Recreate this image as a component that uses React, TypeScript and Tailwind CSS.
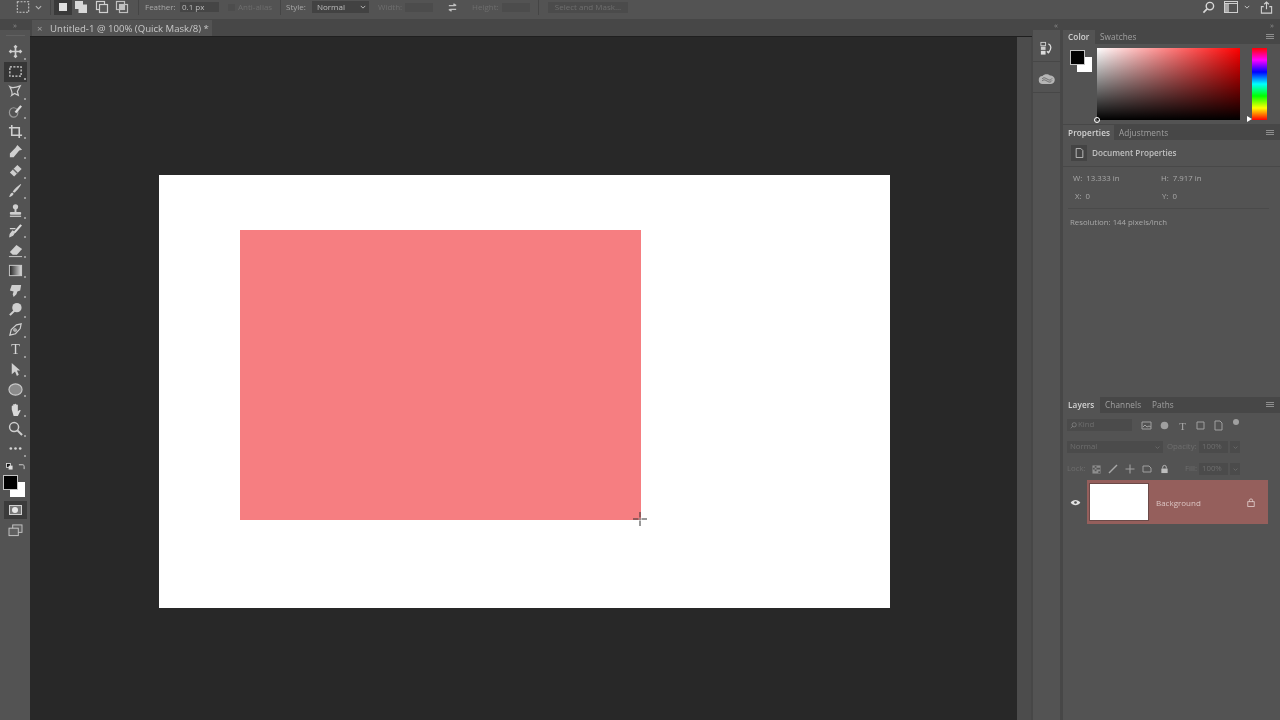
import React from "react";

const font = { fontFamily: '"Open Sans", "Liberation Sans", sans-serif' };

const T = ({ children, className = "" }: { children: React.ReactNode; className?: string }) => (
  <span className={"whitespace-nowrap leading-none " + className}>{children}</span>
);

const stroke = { fill: "none", stroke: "#cfcfcf", strokeWidth: 1.3 } as const;

const toolIcons: React.ReactNode[] = [
  <g key="move" {...stroke}><path d="M8 2v12M2 8h12M6.500 3.500 8 2l1.500 1.500M6.500 12.500 8 14l1.500-1.500M3.500 6.500 2 8l1.500 1.500M12.500 6.500 14 8l-1.500 1.500" strokeWidth={1.800} /></g>,
  <rect key="marquee" x="2" y="3" width="12" height="10" fill="none" stroke="#d5d5d5" strokeWidth={1.300} strokeDasharray="2.200 1.500" />,
  <g key="lasso" {...stroke}><path d="M2 3c3 2 6 1 11-1l-3 6 1 4-4-2-3 2c1-2 0-5-2-9z" /></g>,
  <g key="quick" {...stroke}><ellipse cx="6" cy="9" rx="4.500" ry="5" stroke="#999" /><path d="M8 9l6-7" strokeWidth={2.400} stroke="#ddd" /></g>,
  <g key="crop" {...stroke}><path d="M4 1v11h11M1 4h11v11" strokeWidth={1.700} /></g>,
  <g key="dropper" fill="#cfcfcf"><path d="M10 1l5 5-3 1-6 7H2v-4l6-6z" /></g>,
  <g key="heal"><path d="M2 10l8-8 4.500 4.500-8 8z" fill="#cfcfcf" /><path d="M5.500 6.500l4.500 4.500" stroke="#666" strokeWidth={1.500} /></g>,
  <path key="brush" d="M14 1c.5 1-5 8-7.500 9.500L5 9c1.500-2 8-8.500 9-8zM4.500 10l1.500 1.500c-.5 2-3 3.500-5 3.500 1-1 1-4 3.500-5z" fill="#cfcfcf" />,
  <g key="stamp" fill="#cfcfcf"><circle cx="8" cy="4" r="2.800" /><rect x="7" y="6" width="2" height="4" /><rect x="2" y="9.500" width="12" height="3" rx="1" /><rect x="2" y="13.500" width="12" height="1.300" /></g>,
  <g key="history" {...stroke}><path d="M14 2 7 10" strokeWidth={2.400} stroke="#ddd" /><path d="M7 10l-2 3-3 1.500c0-2 1-4 3-6z" fill="#cfcfcf" /><path d="M2 6h6" /></g>,
  <g key="eraser" fill="#cfcfcf"><path d="M9 2l6 4.500-5.500 6H5L2 9.500z" /><path d="M1 14.500h14" stroke="#cfcfcf" /></g>,
  <g key="grad"><defs><linearGradient id="tg"><stop offset="0" stopColor="#222" /><stop offset="1" stopColor="#ddd" /></linearGradient></defs><rect x="1.500" y="2.500" width="13" height="11" fill="url(#tg)" stroke="#ccc" /></g>,
  <path key="smudge" d="M4 2h10l-1 6-3 1-1 3-3 3-1-3 1-3-4-1z" fill="#cfcfcf" />,
  <g key="dodge" fill="#cfcfcf"><circle cx="9.500" cy="6" r="5" /><path d="M7 9l-5 5" stroke="#cfcfcf" strokeWidth={2.200} /></g>,
  <g key="pen" {...stroke}><path d="M14 2 9 3 3.500 8 2 14l6-1.500 5-5.500z" /><circle cx="7.500" cy="8.500" r="1.300" /></g>,
  <g key="t"><text x="8" y="12.500" textAnchor="middle" fontSize="15" fontFamily="Liberation Serif, serif" fill="#d8d8d8">T</text></g>,
  <path key="arrow" d="M4 1 13 9H9.500l2 4.500-2 1.500-2-5-3.500 3z" fill="#d0d0d0" />,
  <ellipse key="ellipse" cx="8" cy="8" rx="7" ry="6" fill="#8a8a8a" stroke="#c8c8c8" strokeWidth={1.200} />,
  <path key="hand" d="M4 8V4.500c0-1 1.500-1 1.500 0V3c0-1 1.700-1 1.700 0v-.5c0-1 1.700-1 1.700 0V3.500c0-1 1.600-1 1.600 0V10c1-1 2.500-2 3-1l-3 6H6z" fill="#d8d8d8" />,
  <g key="zoom" {...stroke}><circle cx="6.500" cy="6.500" r="4.800" strokeWidth={1.600} /><path d="M10 10l5 5" strokeWidth={2.200} /></g>,
  <g key="more" fill="#d5d5d5"><circle cx="3" cy="8" r="1.400" /><circle cx="8" cy="8" r="1.400" /><circle cx="13" cy="8" r="1.400" /></g>,
];

function Tool({ icon, active }: { icon: React.ReactNode; active?: boolean }) {
  return (
    <div className={"relative flex h-[19.85px] w-[23px] items-center justify-center " + (active ? "bg-[#363636]" : "")}>
      <svg viewBox="0 0 16 16" className="h-[15px] w-[15px]">{icon}</svg>
      <span className="absolute bottom-[2px] right-[1px] h-[2px] w-[2px] bg-[#9a9a9a]" />
    </div>
  );
}

function Swatch() {
  return (
    <div className="relative h-[22px] w-[22px] shrink-0">
      <div className="absolute bottom-0 right-0 h-[15px] w-[15px] bg-white" />
      <div className="absolute left-0 top-0 h-[15px] w-[15px] border border-[#c4c4c4] bg-black" />
    </div>
  );
}

const Chevron = ({ c = "#b5b5b5", className = "h-[7px] w-[7px]" }: { c?: string; className?: string }) => (
  <svg viewBox="0 0 8 8" className={className}><path d="M1 2.500l3 3 3-3" fill="none" stroke={c} strokeWidth={1.300} /></svg>
);

const Div = ({ className = "" }: { className?: string }) => <div className={"h-[16px] w-px bg-[#454545] " + className} />;

function Options() {
  return (
    <div className="flex h-[19px] items-center bg-[#535353] pb-[5px] pt-0 text-[8px] text-[#a8a8a8]">
      <svg viewBox="0 0 16 16" className="ml-[16px] h-[14px] w-[14px] shrink-0"><rect x="1.500" y="2" width="13" height="12" fill="none" stroke="#c8c8c8" strokeWidth={1.200} strokeDasharray="2.200 1.500" /></svg>
      <Chevron className="ml-[4.500px] h-[7px] w-[7px] shrink-0" />
      <Div className="ml-[8.500px] shrink-0" />
      <div className="ml-[3px] flex h-[16px] w-[18px] shrink-0 items-center justify-center bg-[#3a3a3a]"><div className="h-[8px] w-[8px] bg-[#e0e0e0]" /></div>
      <svg viewBox="0 0 14 14" className="ml-[2px] h-[14px] w-[14px] shrink-0"><rect x="1" y="1" width="8" height="8" fill="#d8d8d8" /><rect x="4.500" y="4.500" width="8.500" height="8.500" fill="#d8d8d8" /></svg>
      <svg viewBox="0 0 14 14" className="ml-[7px] h-[14px] w-[14px] shrink-0"><rect x="1.500" y="1.500" width="8" height="8" fill="none" stroke="#d0d0d0" strokeWidth={1.200} /><rect x="4.500" y="4.500" width="8" height="8" fill="#5a5a5a" stroke="#d0d0d0" strokeWidth={1.200} /></svg>
      <svg viewBox="0 0 14 14" className="ml-[6px] h-[14px] w-[14px] shrink-0"><rect x="1.500" y="1.500" width="8" height="8" fill="none" stroke="#c0c0c0" strokeWidth={1.200} /><rect x="4.500" y="4.500" width="8" height="8" fill="none" stroke="#c0c0c0" strokeWidth={1.200} /><rect x="4.500" y="4.500" width="5" height="5" fill="#c0c0c0" /></svg>
      <Div className="ml-[9px] shrink-0" />
      <div className="ml-[6px] w-[30px] shrink-0"><T>Feather:</T></div>
      <div className="ml-[5px] flex h-[10px] w-[39px] shrink-0 items-center bg-[#454545] pl-[2px] text-[#bdbdbd]"><T>0.1 px</T></div>
      <div className="ml-[9px] h-[7px] w-[7px] shrink-0 bg-[#4d4d4d]" />
      <div className="ml-[3px] w-[34px] shrink-0 text-[#6e6e6e]"><T>Anti-alias</T></div>
      <Div className="ml-[8px] shrink-0" />
      <div className="ml-[5px] w-[20px] shrink-0"><T>Style:</T></div>
      <div className="ml-[6px] flex h-[12px] w-[57px] shrink-0 items-center justify-between bg-[#424242] pl-[5px] pr-[3px] text-[#bdbdbd]">
        <T>Normal</T>
        <Chevron className="h-[6px] w-[6px]" />
      </div>
      <div className="ml-[9px] w-[22px] shrink-0 text-[#6e6e6e]"><T>Width:</T></div>
      <div className="ml-[5px] h-[9px] w-[28px] shrink-0 bg-[#4c4c4c]" />
      <svg viewBox="0 0 12 12" className="ml-[13.500px] h-[11px] w-[11px] shrink-0"><path d="M2 4h6.500M7 2l3 2M10 8H3.500M5 10 2 8" fill="none" stroke="#c0c0c0" strokeWidth={1.500} /></svg>
      <div className="ml-[14.500px] w-[25px] shrink-0 text-[#6e6e6e]"><T>Height:</T></div>
      <div className="ml-[5px] h-[9px] w-[28px] shrink-0 bg-[#4c4c4c]" />
      <Div className="ml-[8px] shrink-0" />
      <div className="ml-[9px] flex h-[11px] w-[80px] shrink-0 items-center justify-center bg-[#4b4b4b] text-[#6e6e6e]"><T>Select and Mask...</T></div>
      <div className="flex-1" />
      <svg viewBox="0 0 14 14" className="h-[13px] w-[13px] shrink-0"><circle cx="8.500" cy="5.500" r="4" fill="none" stroke="#d8d8d8" strokeWidth={1.500} /><path d="M5.500 8.500 1.500 12.500" stroke="#d8d8d8" strokeWidth={1.800} /></svg>
      <svg viewBox="0 0 14 12" className="ml-[9.500px] h-[12px] w-[14px] shrink-0"><rect x=".5" y=".5" width="13" height="11" fill="none" stroke="#cfcfcf" /><rect x="1" y="3" width="4" height="8" fill="#a8a8a8" /><path d="M1 2.500h12" stroke="#cfcfcf" /></svg>
      <Chevron c="#c5c5c5" className="ml-[6px] h-[6px] w-[6px] shrink-0" />
      <svg viewBox="0 0 14 14" className="ml-[9.500px] mr-[7.500px] h-[13px] w-[13px] shrink-0"><path d="M4 6H1.500v7h11V6H10M7 9V1M4.500 3.500 7 1l2.500 2.500" fill="none" stroke="#cfcfcf" strokeWidth={1.200} /></svg>
    </div>
  );
}

const Grip = ({ children, className = "" }: { children: string; className?: string }) => (
  <span className={"text-[8px] leading-none text-[#8c8c8c] " + className}>{children}</span>
);

function ToolBar() {
  return (
    <div className="flex w-[30px] shrink-0 flex-col items-center bg-[#535353]">
      <div className="flex h-[10px] w-full items-center justify-center bg-[#474747]"><Grip>»</Grip></div>
      <div className="mt-[5px] h-px w-[19px] bg-[#616161]" />
      <div className="mt-[6px] flex flex-col items-center">
        <Tool icon={toolIcons[0]} />
        <Tool icon={toolIcons[1]} active />
        {toolIcons.slice(2, 21).map((ic, i) => (
          <Tool key={i} icon={ic} />
        ))}
      </div>
      <div className="mt-[4.500px] flex w-[23px] items-center justify-between px-[2px]">
        <svg viewBox="0 0 8 8" className="h-[7px] w-[7px]"><rect x=".5" y=".5" width="4.500" height="4.500" fill="#111" stroke="#ddd" /><rect x="3" y="3" width="4.500" height="4.500" fill="#ddd" /></svg>
        <svg viewBox="0 0 8 8" className="h-[7px] w-[7px]"><path d="M1 2h4.500c1 0 1.500 1 1.500 2v3" fill="none" stroke="#ddd" /></svg>
      </div>
      <div className="ml-[-2px] mt-[5px]"><Swatch /></div>
      <div className="mt-[4px] flex h-[18px] w-[23px] items-center justify-center bg-[#3b3b3b]">
        <div className="flex h-[10px] w-[13px] items-center justify-center border border-[#d0d0d0] bg-[#777777]"><div className="h-[6px] w-[6px] rounded-full bg-[#e8e8e8]" /></div>
      </div>
      <div className="mt-[2px] flex h-[18px] w-[23px] items-center justify-center">
        <svg viewBox="0 0 16 14" className="h-[13px] w-[15px]"><rect x="5" y="1" width="10" height="8" fill="#606060" stroke="#c8c8c8" /><rect x="1" y="4.500" width="10" height="8" fill="#606060" stroke="#c8c8c8" /></svg>
      </div>
    </div>
  );
}

function Canvas() {
  return (
    <div className="relative flex-1 bg-[#282828]">
      <div className="absolute left-[129px] top-[138px] h-[433px] w-[731px] bg-white">
        <div className="absolute left-[81px] top-[55px] h-[290px] w-[401px] bg-[#f67e81]" />
      </div>
      <svg viewBox="0 0 16 16" className="absolute left-[602px] top-[474px] h-[16px] w-[16px]">
        <path d="M8 1v5.500M8 9.500V15M1 8h5.500M9.500 8H15" stroke="#333" strokeWidth={1} />
        <path d="M8 7v2M7 8h2" stroke="#888" strokeWidth={1} />
      </svg>
    </div>
  );
}

function Dock() {
  return (
    <div className="flex w-[31px] shrink-0 flex-col bg-[#474747]">
      <div className="flex h-[10px] items-center justify-end pr-[5px]"><Grip>«</Grip></div>
      <div className="ml-px flex w-[27px] flex-1 flex-col">
        <div className="flex h-[31px] items-center justify-center bg-[#535353] pt-[5px]">
          <svg viewBox="0 0 16 16" className="h-[15px] w-[15px]"><rect x="2" y="1.500" width="5" height="3.500" fill="none" stroke="#ccc" /><rect x="2" y="6" width="5" height="3.500" fill="#ccc" /><rect x="2" y="10.500" width="5" height="4" fill="#ddd" /><path d="M10 3c3 1 4 6 0 9M8.500 11l1.500 1.500L11.500 11" fill="none" stroke="#ddd" strokeWidth={1.400} /></svg>
        </div>
        <div className="mt-px flex h-[30px] items-center justify-center bg-[#535353] pt-[4px]">
          <svg viewBox="0 0 18 12" className="h-[12px] w-[18px]"><path d="M5 11a4 4 0 0 1-.5-8C6 1 10 .5 12 2.500a4.200 4.200 0 0 1 1 8.500z" fill="#b5b5b5" /><path d="M4 6c2-2 3-1 5 0s3 2 5-.5M4 8c2-2 3-1 5 0s3 2 5-.5" fill="none" stroke="#666" /></svg>
        </div>
        <div className="mt-px flex-1 bg-[#535353]" />
      </div>
    </div>
  );
}

function MenuIcon() {
  return (
    <svg viewBox="0 0 8 6" className="h-[6px] w-[8px]"><path d="M0 .5h8M0 2.500h8M0 4.500h8" stroke="#8e8e8e" /></svg>
  );
}

function PanelTabs({ tabs, h, widths, down }: { tabs: string[]; h: number; widths: number[]; down?: boolean }) {
  return (
    <div className="flex items-stretch justify-between bg-[#474747] pr-[6px]" style={{ height: h }}>
      <div className="flex items-stretch">
        {tabs.map((t, i) => (
          <div key={t} style={{ width: widths[i] }} className={"flex items-center pl-[5px] text-[8.200px] tracking-[0.1px] " + (down ? "pt-[2px] " : "") + (i === 0 ? "bg-[#535353] font-semibold text-[#d4d4d4]" : "text-[#a0a0a0]")}>
            <T>{t}</T>
          </div>
        ))}
      </div>
      <div className="flex items-center"><MenuIcon /></div>
    </div>
  );
}

function ColorPanel() {
  return (
    <div className="h-[94px] bg-[#535353]">
      <PanelTabs tabs={["Color", "Swatches"]} h={14} widths={[32, 44]} />
      <div className="flex pt-[4px]">
        <div className="ml-[7px] mt-[2px] w-[27px]"><Swatch /></div>
        <div className="relative h-[72px] w-[143px] bg-[linear-gradient(to_top,#000,transparent),linear-gradient(to_right,#fff,#ff0000)]">
          <div className="absolute bottom-[-3px] left-[-3px] h-[6px] w-[6px] rounded-full border border-white" />
        </div>
        <div className="relative ml-[12px] h-[72px] w-[15px] bg-[linear-gradient(to_bottom,#ff0000,#ff00ff,#0000ff,#00ffff,#00ff00,#ffff00,#ff0000)]">
          <div className="absolute bottom-[-2px] left-[-5px] h-0 w-0 border-y-[3px] border-l-[5px] border-y-transparent border-l-white" />
        </div>
      </div>
    </div>
  );
}

function PropertiesPanel() {
  return (
    <div className="flex h-[272px] flex-col bg-[#535353] text-[7.800px] text-[#a9a9a9]">
      <PanelTabs tabs={["Properties", "Adjustments"]} h={15} widths={[51, 60]} down />
      <div className="flex h-[27px] items-center border-b border-[#484848] pl-[8px]">
        <div className="flex h-[16px] w-[16px] items-center justify-center bg-[#444444]">
          <svg viewBox="0 0 10 12" className="h-[10px] w-[9px]"><path d="M1 .5h5.500L9 3v8.500H1z" fill="none" stroke="#cfcfcf" /></svg>
        </div>
        <T className="ml-[5px] text-[8.200px] font-semibold text-[#c0c0c0]">Document Properties</T>
      </div>
      <div className="mr-[11px] flex flex-1 flex-col">
        <div className="ml-[10px] flex pt-[8px]"><T className="w-[88px]">W:&nbsp; 13.333 in</T><T>H:&nbsp; 7.917 in</T></div>
        <div className="ml-[10px] mt-[10px] flex pb-[7px]"><T className="w-[88px] pl-[2px]">X:&nbsp; 0</T><T className="pl-[1px]">Y:&nbsp; 0</T></div>
        <div className="ml-[5px] border-t border-[#4a4a4a] pl-[2px] pt-[8px]"><T>Resolution: 144 pixels/inch</T></div>
      </div>
    </div>
  );
}

const StepBox = () => (
  <>
    <div className="flex h-[12px] w-[29px] shrink-0 items-center bg-[#4b4b4b] pl-[3px]"><T>100%</T></div>
    <div className="ml-[2px] flex h-[12px] w-[10px] shrink-0 items-center justify-center bg-[#4b4b4b]"><Chevron c="#6f6f6f" className="h-[5px] w-[5px]" /></div>
  </>
);

const LockIcon = ({ w, h, icon }: { w: number; h: number; icon: React.ReactNode }) => (
  <div className="flex w-[17px] shrink-0 justify-center">
    <svg viewBox="0 0 10 10" style={{ width: w, height: h }}>{icon}</svg>
  </div>
);

function LayersPanel() {
  return (
    <div className="flex flex-1 flex-col bg-[#535353] text-[7.800px] text-[#6e6e6e]">
      <PanelTabs tabs={["Layers", "Channels", "Paths"]} h={16} widths={[37, 47, 30]} />
      <div className="mt-[6px] flex h-[12px] items-center pl-[4px]">
        <div className="flex h-[12px] w-[65px] shrink-0 items-center bg-[#4b4b4b] pl-[3px]">
          <svg viewBox="0 0 10 10" className="mr-[1px] h-[7px] w-[7px]"><circle cx="6" cy="4" r="3" fill="none" stroke="#8a8a8a" /><path d="M4 6 1 9" stroke="#8a8a8a" /></svg>
          <T>Kind</T>
        </div>
        <div className="ml-[8.500px] flex items-center gap-[7px]">
          {["M1 2h9v7H1zM2 7l2-2 2 2 2-1 2 1", "", "", "M2 2h7v7H2z", "M2 1h5l2 2v7H2z"].map((d, i) => (
            <svg key={i} viewBox="0 0 11 11" className="h-[11px] w-[11px]">
              {i === 1 ? <circle cx="5.500" cy="5.500" r="3.800" fill="#a0a0a0" /> : i === 2 ? <text x="5.500" y="9.500" textAnchor="middle" fontSize="11" fill="#a8a8a8" fontFamily="Liberation Serif, serif">T</text> : <path d={d} fill="none" stroke="#a0a0a0" strokeWidth={1} />}
            </svg>
          ))}
          <div className="mb-[6px] ml-[2px] h-[6px] w-[6px] rounded-full bg-[#a0a0a0]" />
        </div>
      </div>
      <div className="mt-[10px] flex h-[12px] items-center pl-[4px]">
        <div className="flex h-[12px] w-[96px] shrink-0 items-center justify-between bg-[#4b4b4b] px-[3px]">
          <T>Normal</T>
          <Chevron c="#6f6f6f" className="h-[5px] w-[5px]" />
        </div>
        <div className="ml-[4px] w-[29px] shrink-0"><T>Opacity:</T></div>
        <div className="ml-[3px] flex"><StepBox /></div>
      </div>
      <div className="mt-[10px] flex h-[12px] items-center pl-[4px]">
        <div className="w-[20.500px] shrink-0"><T>Lock:</T></div>
        <LockIcon w={9} h={9} icon={<><rect x=".5" y=".5" width="9" height="9" fill="#8e8e8e" /><path d="M3 1h2v2H3zM7 3h2v2H7zM1 3h2v2H1zM5 3h2v2H5zM3 5h2v2H3zM7 7h2v2H7z" fill="#555" /></>} />
        <LockIcon w={10} h={10} icon={<path d="M9 1 3 7 1 9" stroke="#a8a8a8" strokeWidth={1.500} />} />
        <LockIcon w={10} h={10} icon={<path d="M5 .5v9M.5 5h9" stroke="#a0a0a0" strokeWidth={1.100} />} />
        <LockIcon w={10} h={10} icon={<path d="M1 2h6l2 2v4H1z" fill="none" stroke="#a0a0a0" />} />
        <LockIcon w={9} h={10} icon={<><rect x="1.500" y="4.500" width="7" height="5" fill="#bdbdbd" /><path d="M3 4.500V3a2 2 0 0 1 4 0v1.500" fill="none" stroke="#bdbdbd" /></>} />
        <div className="mr-[2px] w-[24.500px] shrink-0 text-right"><T>Fill:</T></div>
        <StepBox />
      </div>
      <div className="mt-[5px] flex h-[44px] items-center">
        <div className="flex w-[24px] shrink-0 justify-center">
          <svg viewBox="0 0 12 8" className="h-[7px] w-[11px]"><path d="M.5 4C3 0 9 0 11.500 4 9 8 3 8 .5 4z" fill="#e2e2e2" /><circle cx="6" cy="4" r="1.500" fill="#535353" /></svg>
        </div>
        <div className="flex h-[44px] w-[181px] items-center bg-[#955f5c]">
          <div className="ml-[2px] h-[38px] w-[60px] border border-[#6b4a48] bg-white" />
          <T className="ml-[7px] mt-[2px] text-[8px] text-[#dcc5c3]">Background</T>
          <div className="flex-1" />
          <svg viewBox="0 0 10 11" className="mr-[13px] h-[9px] w-[8px]"><rect x="1" y="4.500" width="8" height="6" fill="none" stroke="#e5d3d1" /><path d="M3 4.500V3a2 2 0 0 1 4 0v1.500" fill="none" stroke="#e5d3d1" /></svg>
        </div>
      </div>
    </div>
  );
}

export default function App() {
  return (
    <div className="flex h-[720px] w-[1280px] flex-col overflow-hidden bg-[#535353] blur-[0.4px]" style={font}>
      <Options />
      <div className="h-px bg-[#474747]" />
      <div className="flex min-h-0 flex-1">
        <ToolBar />
        <div className="flex w-[1002px] shrink-0 flex-col">
          <div className="flex h-[16px] bg-[#474747]">
            <div className="ml-[2px] flex w-[180px] items-center bg-[#535353] pl-[5px] pt-[1px] text-[9.600px] text-[#c8c8c8]">
              <T className="w-[13px] text-[#a0a0a0]">×</T>
              <T className="font-medium">Untitled-1 @ 100% (Quick Mask/8) *</T>
            </div>
          </div>
          <div className="h-px bg-[#1f1f1f]" />
          <div className="flex min-h-0 flex-1">
            <Canvas />
            <div className="w-[14px] shrink-0 bg-[#4c4c4c]" />
            <div className="w-px shrink-0 bg-[#474747]" />
          </div>
        </div>
        <Dock />
        <div className="flex w-[217px] shrink-0 flex-col">
          <div className="flex h-[10px] items-center justify-end bg-[#474747] pr-[6px]"><Grip>»</Grip></div>
          <ColorPanel />
          <div className="h-px bg-[#474747]" />
          <PropertiesPanel />
          <LayersPanel />
        </div>
      </div>
    </div>
  );
}
